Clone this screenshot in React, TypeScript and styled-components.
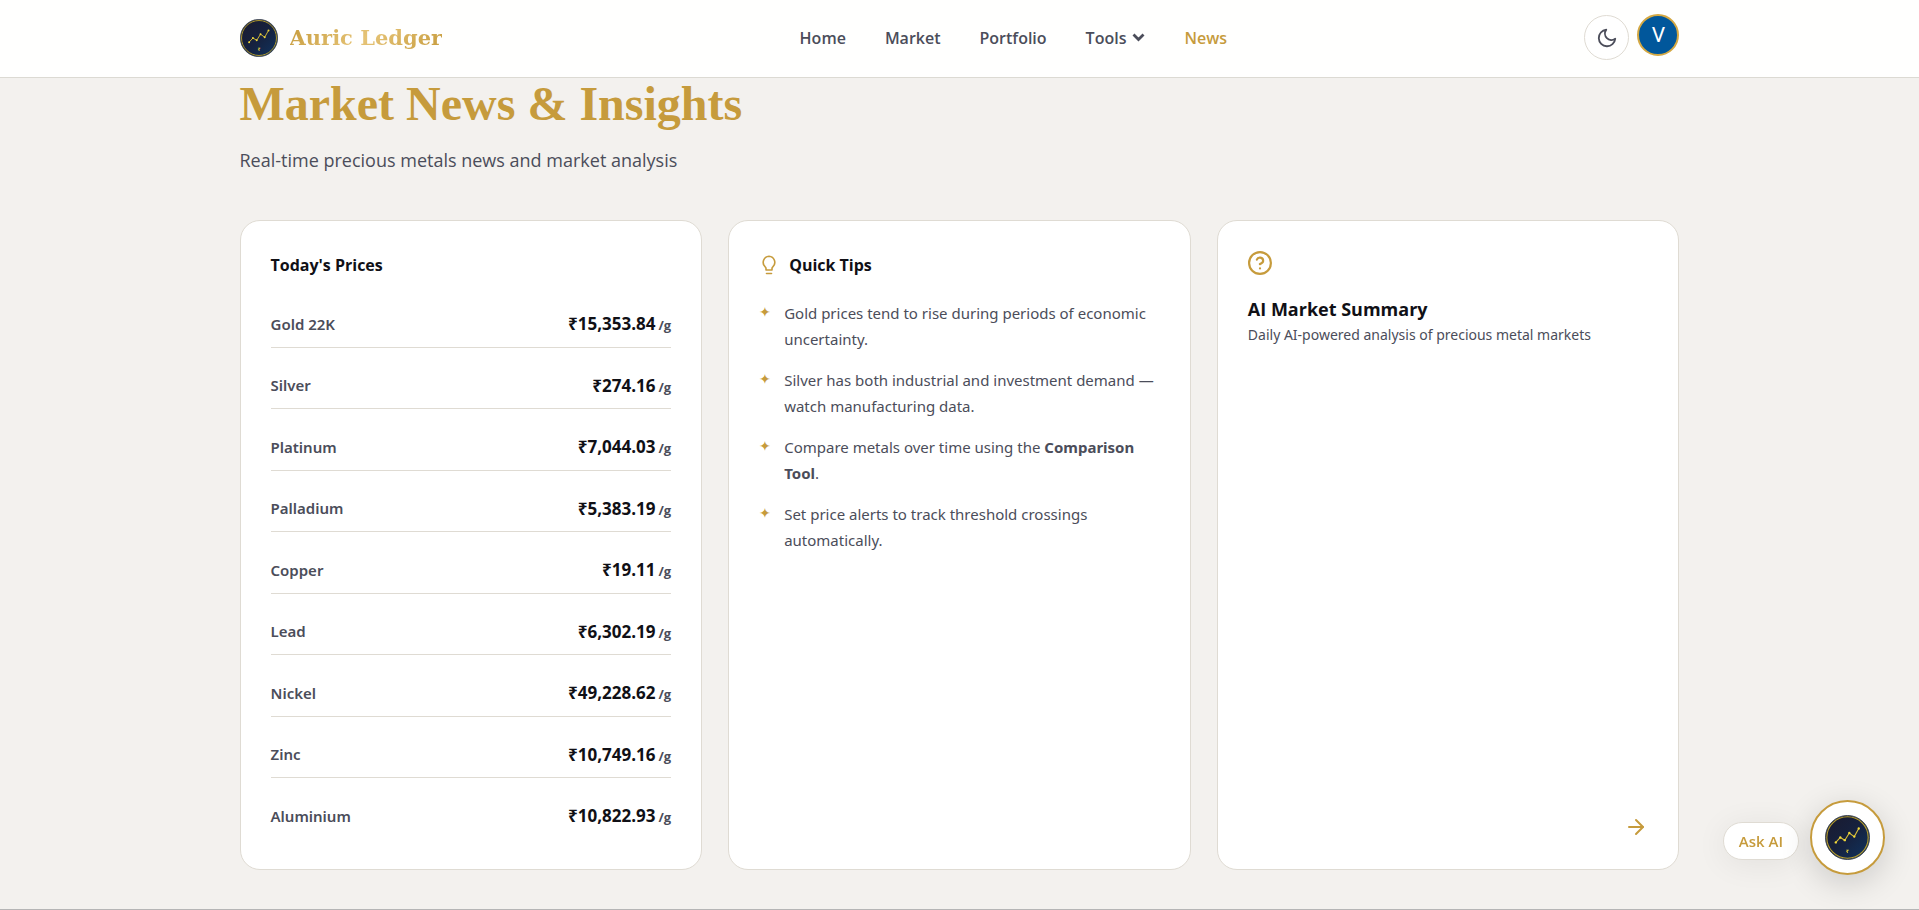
import React from "react";
import styled, { createGlobalStyle } from "styled-components";
import { ArrowRight } from "lucide-react";

const gold = "#c69b3c";
const ink = "#101016";
const slate = "#4b4d5a";
const line = "#dfdbd3";

const GlobalStyle = createGlobalStyle`
  * { box-sizing: border-box; }
  body {
    margin: 0;
    background: #f3f1ee;
    color: ${slate};
    font-family: "Open Sans", "Noto Sans", sans-serif;
    font-size: 15px;
  }
  h1, h2, p, ul { margin: 0; padding: 0; }
  a { color: inherit; text-decoration: none; }
  button { font: inherit; color: inherit; padding: 0; cursor: pointer; }
`;

const Header = styled.header`
  position: sticky;
  top: 0;
  z-index: 2;
  background: #fffffe;
  border-bottom: 1px solid #dcdad3;
`;

const HeaderInner = styled.div`
  display: flex;
  align-items: center;
  justify-content: space-between;
  max-width: 1440px;
  min-height: 77px;
  margin: 0 auto;
  padding-bottom: 2px;
`;

const Brand = styled.a`
  display: flex;
  align-items: center;
  gap: 12px;
`;

const BrandName = styled.span`
  font-family: "DejaVu Serif", serif;
  font-size: 21px;
  font-weight: 700;
  line-height: 28px;
  background: linear-gradient(135deg, #c69b3c 0%, #e6c477 50%, #c69b3c 100%);
  background-clip: text;
  color: transparent;
`;

const Nav = styled.nav`
  display: flex;
  align-items: center;
  gap: 39px;
`;

const navItem = `
  display: flex;
  align-items: center;
  gap: 6px;
  font-size: 16px;
  font-weight: 600;
  line-height: 24px;
`;

const NavLink = styled.a<{ $active?: boolean }>`
  ${navItem}
  color: ${(p) => (p.$active ? gold : slate)};
`;

const NavButton = styled.button`
  border: 0;
  background: none;
  && {
    ${navItem}
  }
`;

const Actions = styled.div`
  display: flex;
  align-items: center;
  gap: 8px;
`;

const ThemeButton = styled.button`
  display: grid;
  place-items: center;
  width: 45px;
  height: 45px;
  border: 1px solid ${line};
  border-radius: 50%;
  background: #ffffff;
`;

const Avatar = styled.button`
  width: 42px;
  height: 42px;
  margin-bottom: 6px;
  border: 2px solid #d4a843;
  border-radius: 50%;
  background: #01579b;
  && {
    color: #ffffff;
    font-family: Roboto, sans-serif;
    font-size: 21px;
    line-height: 38px;
  }
`;

const Main = styled.main`
  max-width: 1440px;
  margin: 0 auto;
  padding-bottom: 39px;
`;

const PageTitle = styled.h1`
  color: ${gold};
  font-family: "Liberation Serif", serif;
  font-size: 48px;
  font-weight: 700;
  line-height: 52px;
`;

const Subtitle = styled.p`
  margin-top: 16px;
  font-size: 18px;
  line-height: 28px;
`;

const CardGrid = styled.div`
  display: grid;
  grid-template-columns: repeat(3, minmax(0, 1fr));
  gap: 26px;
  margin-top: 46px;
`;

const Card = styled.section`
  display: flex;
  flex-direction: column;
  padding: 30px;
  border: 1px solid ${line};
  border-radius: 20px;
  background: #ffffff;
`;

const CardHead = styled.div`
  display: flex;
  align-items: center;
  gap: 10px;
`;

const CardTitle = styled.h2<{ $large?: boolean }>`
  color: ${ink};
  font-size: ${(p) => (p.$large ? 18 : 16)}px;
  font-weight: 700;
  line-height: 28px;
`;

const PriceTable = styled.table`
  width: 100%;
  margin-top: 7px;
  border-spacing: 0;
  th, td {
    height: 62px;
    padding: 14px 0 0;
    border-bottom: 1px solid ${line};
  }
  tr:nth-child(even) > * { height: 61px; }
  tr:last-child > * { height: 61px; border-bottom: 0; }
`;

const Metal = styled.th`
  font-family: "Noto Sans", sans-serif;
  font-size: 15px;
  font-weight: 600;
  text-align: left;
`;

const Price = styled.td`
  color: ${ink};
  font-size: 17px;
  font-weight: 700;
  text-align: right;
`;

const Unit = styled.span`
  margin-left: 3px;
  color: ${slate};
  font-size: 13px;
`;

const TipList = styled.ul`
  display: flex;
  flex-direction: column;
  gap: 15px;
  margin-top: 21px;
  list-style: none;
  font-family: "Noto Sans", sans-serif;
`;

const Tip = styled.li`
  display: flex;
  gap: 13px;
  line-height: 26px;
`;

const TipMark = styled.span`
  flex: 0 0 10px;
  color: ${gold};
  font-size: 14px;
  line-height: 24px;
`;

const SummaryIcon = styled.div`
  height: 24px;
  margin-bottom: 20px;
`;

const SummaryText = styled.p`
  font-family: "Noto Sans", sans-serif;
  font-size: 14px;
  line-height: 24px;
`;

const ArrowLink = styled.a`
  display: flex;
  align-self: flex-end;
  margin-top: auto;
  color: ${gold};
`;

const Footer = styled.footer`
  border-top: 1px solid #b5b5b5;
`;

const ChatDock = styled.div`
  position: fixed;
  right: 34px;
  bottom: 35px;
  z-index: 3;
  display: flex;
  align-items: flex-end;
  gap: 11px;
`;

const ChatLabel = styled.button`
  height: 38px;
  margin-bottom: 15px;
  border: 1px solid ${line};
  border-radius: 19px;
  background: #ffffff;
  box-shadow: 0 4px 32px rgba(0, 0, 0, 0.07);
  && {
    padding: 0 15px;
    color: ${gold};
    font-size: 15px;
    font-weight: 600;
  }
`;

const ChatButton = styled.button`
  display: grid;
  place-items: center;
  width: 75px;
  height: 75px;
  border: 2px solid ${gold};
  border-radius: 50%;
  background: #ffffff;
  box-shadow: 0 8px 32px rgba(0, 0, 0, 0.16);
`;

function Logo({ size, id }: { size: number; id: string }) {
  const points = [[24, 61], [34, 50], [44, 56], [54, 40], [65, 48], [75, 30]];
  return (
    <svg width={size} height={size} viewBox="0 0 100 100" aria-hidden="true">
      <defs>
        <linearGradient id={id} x1="0" y1="0" x2="1" y2="1">
          <stop offset="0" stopColor="#1a1a2e" />
          <stop offset="0.5" stopColor="#16213e" />
          <stop offset="1" stopColor="#0f3460" />
        </linearGradient>
      </defs>
      <circle cx="50" cy="50" r="49" fill={`url(#${id})`} stroke="#3b4350" strokeWidth="2" />
      <circle cx="50" cy="50" r="46" fill="none" stroke="#b9a02c" strokeWidth="2.4" />
      <polyline points={points.map((p) => p.join(",")).join(" ")} fill="none" stroke="#d9be38" strokeWidth="2.4" />
      {points.map(([x, y]) => (
        <circle key={x} cx={x} cy={y} r="2.6" fill="#f0d83a" />
      ))}
      <text x="50" y="84" textAnchor="middle" fontSize="12" fontWeight="700" fill="#f0d83a">₹</text>
    </svg>
  );
}

const prices: [string, string][] = [
  ["Gold 22K", "15,353.84"],
  ["Silver", "274.16"],
  ["Platinum", "7,044.03"],
  ["Palladium", "5,383.19"],
  ["Copper", "19.11"],
  ["Lead", "6,302.19"],
  ["Nickel", "49,228.62"],
  ["Zinc", "10,749.16"],
  ["Aluminium", "10,822.93"],
];

const tips: React.ReactNode[] = [
  "Gold prices tend to rise during periods of economic uncertainty.",
  "Silver has both industrial and investment demand — watch manufacturing data.",
  <>Compare metals over time using the <strong>Comparison Tool</strong>.</>,
  "Set price alerts to track threshold crossings automatically.",
];

export default function App() {
  return (
    <>
      <GlobalStyle />
      <Header>
        <HeaderInner>
          <Brand href="#">
            <Logo size={38} id="brandFill" />
            <BrandName>Auric Ledger</BrandName>
          </Brand>
          <Nav aria-label="Main">
            <NavLink href="#">Home</NavLink>
            <NavLink href="#">Market</NavLink>
            <NavLink href="#">Portfolio</NavLink>
            <NavButton type="button" aria-haspopup="true">
              Tools
              <svg width="13" height="13" viewBox="0 0 13 13" fill="none" stroke="currentColor" strokeWidth="2.8" aria-hidden="true">
                <path d="M1.5 3.5 6.5 8.5 11.5 3.5" />
              </svg>
            </NavButton>
            <NavLink href="#" $active aria-current="page">News</NavLink>
          </Nav>
          <Actions>
            <ThemeButton type="button" aria-label="Switch to dark theme">
              <svg width="22" height="22" viewBox="0 0 24 24" fill="none" stroke="currentColor" strokeWidth="2" strokeLinecap="round" strokeLinejoin="round" aria-hidden="true">
                <path d="M21 12.8A9 9 0 1 1 11.2 3a7 7 0 0 0 9.8 9.8z" />
              </svg>
            </ThemeButton>
            <Avatar type="button" aria-label="Account">V</Avatar>
          </Actions>
        </HeaderInner>
      </Header>

      <Main>
        <PageTitle>Market News &amp; Insights</PageTitle>
        <Subtitle>Real-time precious metals news and market analysis</Subtitle>
        <CardGrid>
          <Card>
            <CardTitle id="prices">Today's Prices</CardTitle>
            <PriceTable aria-labelledby="prices">
              <tbody>
                {prices.map(([metal, price]) => (
                  <tr key={metal}>
                    <Metal scope="row">{metal}</Metal>
                    <Price>₹{price}<Unit>/g</Unit></Price>
                  </tr>
                ))}
              </tbody>
            </PriceTable>
          </Card>

          <Card>
            <CardHead>
              <svg width="20" height="20" viewBox="0 0 20 20" fill="none" stroke={gold} strokeWidth="1.6" strokeLinecap="round" strokeLinejoin="round" aria-hidden="true">
                <path d="M7 15v-1.6c0-.6-.3-1.1-.8-1.5A6.2 6.2 0 0 1 10 1.2a6.2 6.2 0 0 1 3.8 10.7c-.5.4-.8.9-.8 1.5V15z" />
                <path d="M7.5 18.5h5" />
              </svg>
              <CardTitle>Quick Tips</CardTitle>
            </CardHead>
            <TipList>
              {tips.map((tip, i) => (
                <Tip key={i}>
                  <TipMark aria-hidden="true">✦</TipMark>
                  <span>{tip}</span>
                </Tip>
              ))}
            </TipList>
          </Card>

          <Card>
            <SummaryIcon>
              <svg width="24" height="24" viewBox="1 1 22 22" fill="none" stroke={gold} strokeWidth="2" strokeLinecap="round" strokeLinejoin="round" aria-hidden="true">
                <circle cx="12" cy="12" r="10" />
                <path d="M9.1 9a3 3 0 0 1 5.8 1c0 2-3 3-3 3" />
                <path d="M12 17h.01" />
              </svg>
            </SummaryIcon>
            <CardTitle $large>AI Market Summary</CardTitle>
            <SummaryText>Daily AI-powered analysis of precious metal markets</SummaryText>
            <ArrowLink href="#" aria-label="Open AI market summary">
              <ArrowRight size={24} strokeWidth={2} />
            </ArrowLink>
          </Card>
        </CardGrid>
      </Main>
      <Footer />

      <ChatDock>
        <ChatLabel type="button">Ask AI</ChatLabel>
        <ChatButton type="button" aria-label="Open chat">
          <Logo size={45} id="chatFill" />
        </ChatButton>
      </ChatDock>
    </>
  );
}
